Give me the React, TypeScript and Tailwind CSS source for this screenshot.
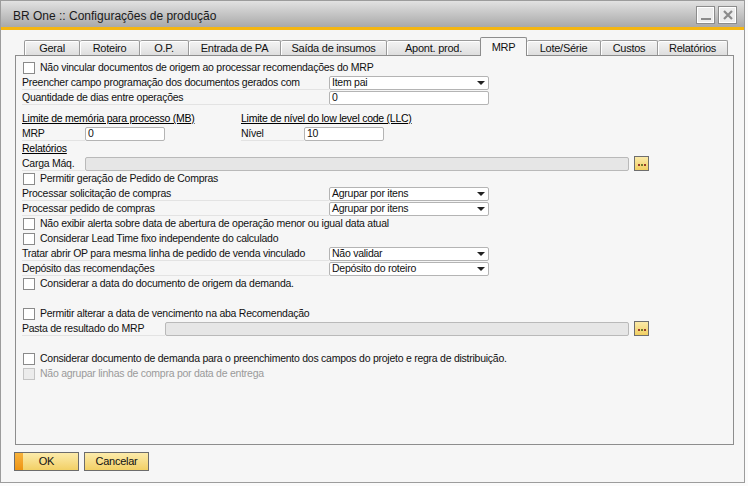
import React from 'react';

const FONT = "font-['Liberation_Sans',Arial,sans-serif]";

const Checkbox: React.FC<{ label: string; disabled?: boolean }> = ({ label, disabled }) => (
    <div className="flex h-[15px] items-center">
        <span
            className={`ml-px h-[12px] w-[12px] shrink-0 border ${
                disabled ? 'border-[#c4c4c4] bg-[#ececec]' : 'border-[#8a8a8a] bg-white'
            }`}
        />
        <span className={`ml-[5px] mt-px whitespace-nowrap ${disabled ? 'text-[#9a9a9a]' : 'text-[#111]'}`}>{label}</span>
    </div>
);

const Field: React.FC<{ value?: string; w: string; disabled?: boolean; select?: boolean }> = ({
    value = '',
    w,
    disabled,
    select,
}) => (
    <div
        className={`relative flex h-[14px] shrink-0 items-center rounded-[2px] border pl-[2px] ${w} ${
            disabled ? 'border-[#b9b9b9] bg-[#e6e6e6]' : 'border-[#b4b4b4] bg-white'
        }`}
    >
        <span className="leading-none text-[#111]">{value}</span>
        {select && (
            <span className="absolute right-[3px] top-[4px] h-0 w-0 border-x-[4px] border-t-[4px] border-x-transparent border-t-[#222]" />
        )}
    </div>
);

const Ellipsis: React.FC = () => (
    <div className="ml-[5px] flex h-[15px] w-[15px] shrink-0 items-end justify-center gap-px border border-[#6e6e6e] bg-gradient-to-b from-[#fbeaa8] to-[#f1cf60] pb-[4px]">
        <span className="h-[2px] w-[2px] bg-[#9a3b2b]" />
        <span className="h-[2px] w-[2px] bg-[#6f7a2a]" />
        <span className="h-[2px] w-[2px] bg-[#9a3b2b]" />
    </div>
);

const LabelRow: React.FC<{ label: string; labelW?: string; children: React.ReactNode }> = ({
    label,
    labelW = 'w-[307px]',
    children,
}) => (
    <div className="flex h-[15px] items-center">
        <div className={`flex h-full shrink-0 items-center border-b border-[#e3e3e3] pt-[2px] ${labelW}`}>
            <span className="whitespace-nowrap text-[#111]">{label}</span>
        </div>
        {children}
    </div>
);

const tabs = [
    { name: 'Geral', w: 'w-[56px] border-l' },
    { name: 'Roteiro', w: 'w-[60px]' },
    { name: 'O.P.', w: 'w-[49px]' },
    { name: 'Entrada de PA', w: 'w-[92px]' },
    { name: 'Saída de insumos', w: 'w-[106px]' },
    { name: 'Apont. prod.', w: 'w-[94px]' },
    { name: 'MRP', w: 'w-[47px]', active: true },
    { name: 'Lote/Série', w: 'w-[74px]' },
    { name: 'Custos', w: 'w-[57px]' },
    { name: 'Relatórios', w: 'w-[70px]' },
];

export default function App() {
    return (
        <div className={`h-[486px] w-[748px] overflow-hidden bg-[#fbfbfb] text-[10.5px] tracking-[-0.25px] ${FONT}`}>
            <div className="flex h-[483px] w-[745px] flex-col border border-[#9c9c9c] bg-[#f6f6f6]">
                {/* title bar */}
                <div className="flex h-[26px] shrink-0 items-center justify-between bg-gradient-to-b from-[#e2e2e2] to-[#a9a9a9] pl-[12px] pr-[7px]">
                    <span className="mt-[3px] text-[12px] tracking-normal text-[#1a1a1a]">BR One :: Configurações de produção</span>
                    <div className="flex gap-[3px] pt-[2px]">
                        <div className="flex h-[18px] w-[19px] items-end justify-center border border-[#8c8c8c] bg-[#ececec] pb-[3px] shadow-[inset_0_0_0_1px_#fff]">
                            <span className="h-[2px] w-[10px] bg-[#8a8a8a]" />
                        </div>
                        <div className="flex h-[18px] w-[19px] items-center justify-center border border-[#8c8c8c] bg-[#ececec] shadow-[inset_0_0_0_1px_#fff]">
                            <svg width="10" height="10" viewBox="0 0 10 10">
                                <path d="M1 1 L9 9 M9 1 L1 9" stroke="#8a8a8a" strokeWidth="2.2" />
                            </svg>
                        </div>
                    </div>
                </div>
                <div className="h-[3px] shrink-0 bg-[#f4b611]" />

                {/* body */}
                <div className="flex flex-1 flex-col pl-[14px] pt-[7px]">
                    <div className="flex h-[18px] items-end pl-[9px]">
                        {tabs.map((t) =>
                            t.active ? (
                                <div
                                    key={t.name}
                                    className={`relative z-10 -mb-px -ml-px flex h-[19px] items-center justify-center rounded-t-[2px] border-x border-t border-[#8d8d8d] bg-[#f6f6f6] pt-px text-[11px] text-[#111] ${t.w}`}
                                >
                                    {t.name}
                                </div>
                            ) : (
                                <div
                                    key={t.name}
                                    className={`flex h-[15px] items-center justify-center rounded-t-[2px] border-r border-t border-[#9a9a9a] bg-gradient-to-b from-[#f4f4f4] to-[#dedede] text-[11px] text-[#111] shadow-[inset_1px_1px_0_#fff] ${t.w}`}
                                >
                                    {t.name}
                                </div>
                            ),
                        )}
                    </div>

                    {/* panel */}
                    <div className="flex h-[390px] w-[719px] flex-col border border-[#8d8d8d] pl-[6px] pt-[4px]">
                        <Checkbox label="Não vincular documentos de origem ao processar recomendações do MRP" />
                        <LabelRow label="Preencher campo programação dos documentos gerados com">
                            <Field w="w-[160px]" value="Item pai" select />
                        </LabelRow>
                        <LabelRow label="Quantidade de dias entre operações">
                            <Field w="w-[160px]" value="0" />
                        </LabelRow>

                        <div className="mt-[6px] flex h-[15px] items-center pt-px">
                            <span className="w-[219px] underline">Limite de memória para processo (MB)</span>
                            <span className="underline">Limite de nível do low level code (LLC)</span>
                        </div>
                        <div className="flex h-[15px] items-center">
                            <LabelRow label="MRP" labelW="w-[63px]">
                                <Field w="w-[80px]" value="0" />
                            </LabelRow>
                            <div className="ml-[76px]">
                                <LabelRow label="Nível" labelW="w-[63px]">
                                    <Field w="w-[80px]" value="10" />
                                </LabelRow>
                            </div>
                        </div>
                        <div className="flex h-[15px] items-center pt-px">
                            <span className="underline">Relatórios</span>
                        </div>
                        <LabelRow label="Carga Máq." labelW="w-[63px]">
                            <Field w="w-[544px]" disabled />
                            <Ellipsis />
                        </LabelRow>
                        <Checkbox label="Permitir geração de Pedido de Compras" />
                        <LabelRow label="Processar solicitação de compras">
                            <Field w="w-[160px]" value="Agrupar por itens" select />
                        </LabelRow>
                        <LabelRow label="Processar pedido de compras">
                            <Field w="w-[160px]" value="Agrupar por itens" select />
                        </LabelRow>
                        <Checkbox label="Não exibir alerta sobre data de abertura de operação menor ou igual data atual" />
                        <Checkbox label="Considerar Lead Time fixo independente do calculado" />
                        <LabelRow label="Tratar abrir OP para mesma linha de pedido de venda vinculado">
                            <Field w="w-[160px]" value="Não validar" select />
                        </LabelRow>
                        <LabelRow label="Depósito das recomendações">
                            <Field w="w-[160px]" value="Depósito do roteiro" select />
                        </LabelRow>
                        <Checkbox label="Considerar a data do documento de origem da demanda." />
                        <div className="h-[15px]" />
                        <Checkbox label="Permitir alterar a data de vencimento na aba Recomendação" />
                        <LabelRow label="Pasta de resultado do MRP" labelW="w-[143px]">
                            <Field w="w-[464px]" disabled />
                            <Ellipsis />
                        </LabelRow>
                        <div className="h-[15px]" />
                        <Checkbox label="Considerar documento de demanda para o preenchimento dos campos do projeto e regra de distribuição." />
                        <Checkbox label="Não agrupar linhas de compra por data de entrega" disabled />
                    </div>

                    {/* buttons */}
                    <div className="-ml-px mt-[7px] flex gap-[5px]">
                        <button className="relative flex h-[19px] w-[65px] items-center justify-center border border-[#6c6c6c] bg-gradient-to-b from-[#fcebaa] to-[#f2d064] text-[11px] text-[#111]">
                            <span className="absolute inset-y-0 left-0 w-[8px] bg-gradient-to-b from-[#f7b23a] to-[#ee9410]" />
                            OK
                        </button>
                        <button className="flex h-[19px] w-[65px] items-center justify-center border border-[#6c6c6c] bg-gradient-to-b from-[#fcebaa] to-[#f2d064] text-[11px] text-[#111]">
                            Cancelar
                        </button>
                    </div>
                </div>
            </div>
        </div>
    );
}
